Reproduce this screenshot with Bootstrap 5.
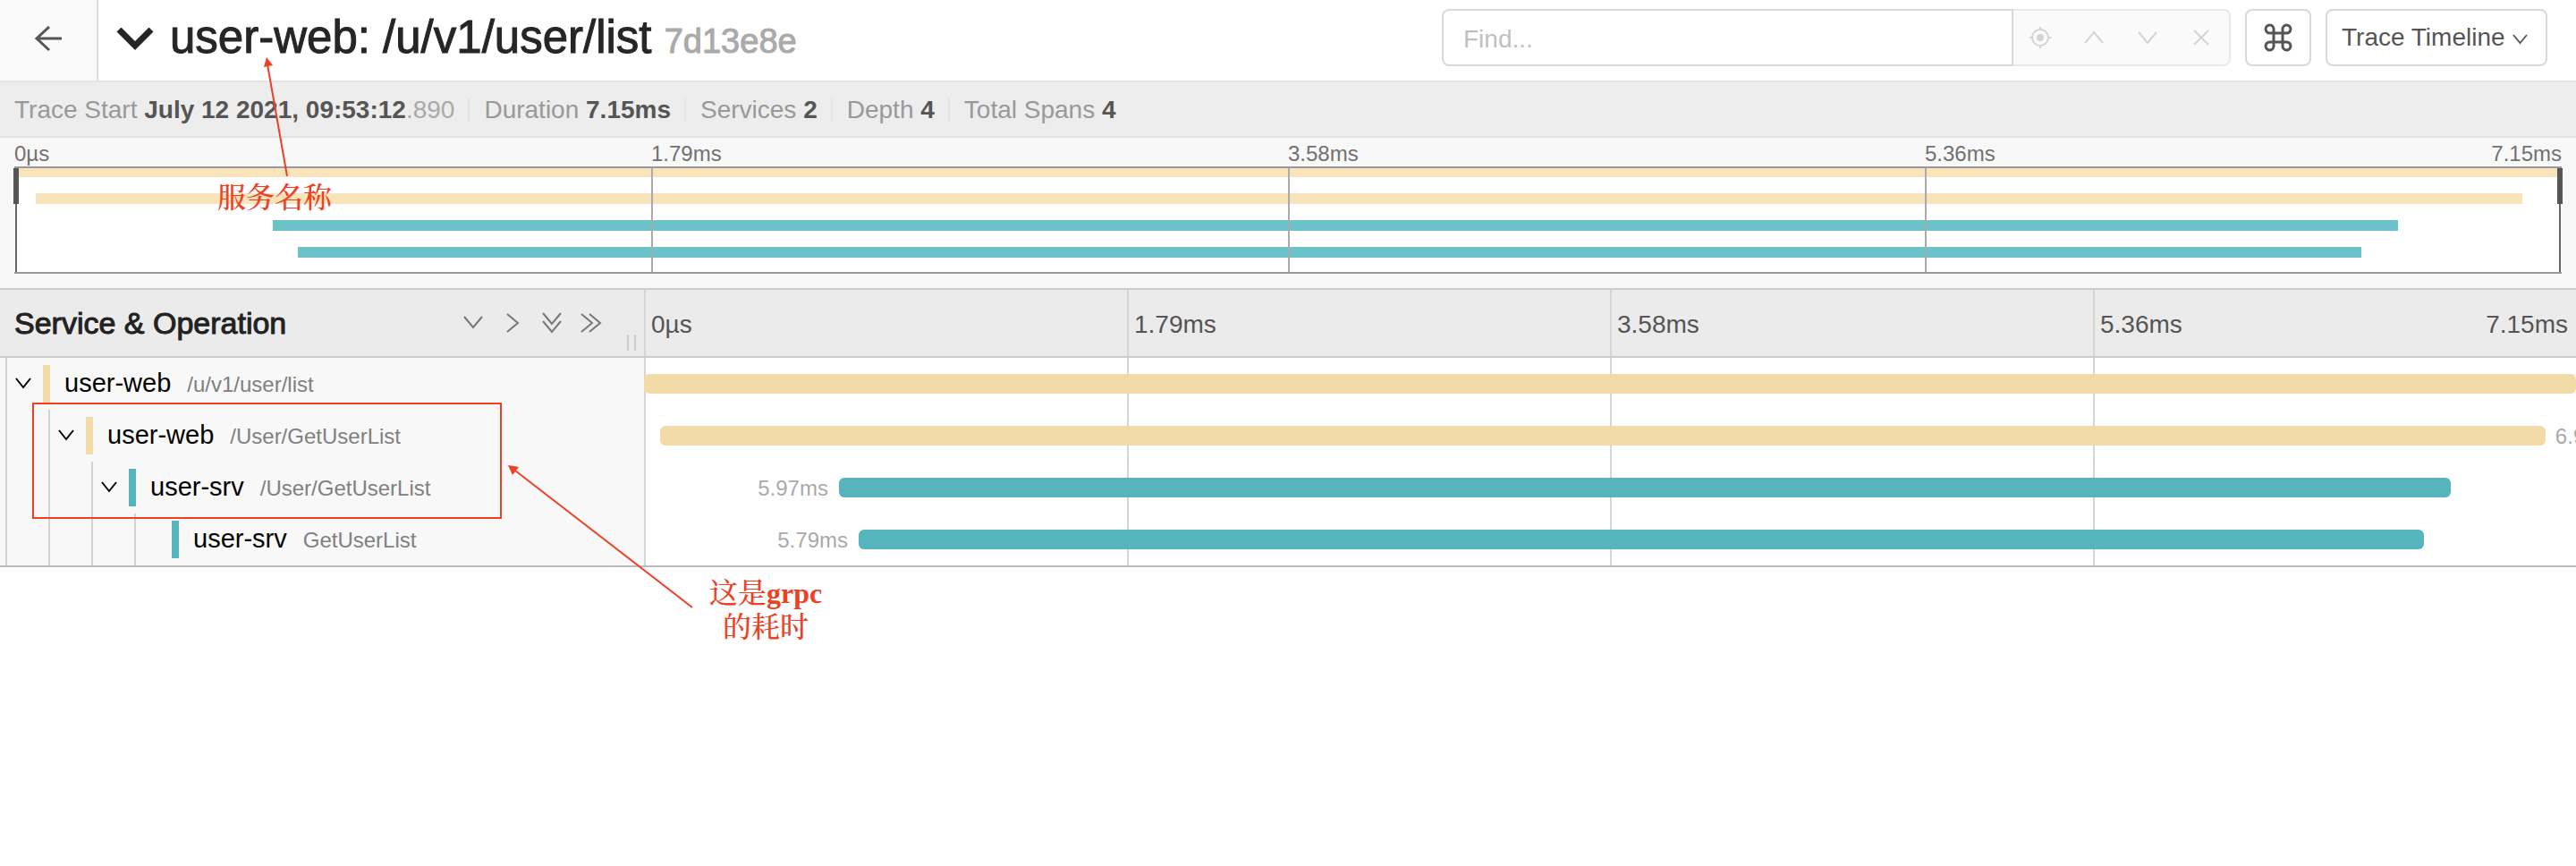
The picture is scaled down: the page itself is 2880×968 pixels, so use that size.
<!DOCTYPE html>
<html lang="en">
<head>
<meta charset="utf-8">
<meta name="viewport" content="width=device-width, initial-scale=1">
<title>user-web: /u/v1/user/list</title>
<link href="https://cdn.jsdelivr.net/npm/bootstrap@5.3.0/dist/css/bootstrap.min.css" rel="stylesheet">
<style>
  :root { --sand: #f3dba8; --teal: #55b4bc; --note: #ee4023; }
  body { font-family: "Liberation Sans", Arial, sans-serif; font-size: 28px; line-height: 32px; color: #555; background: #fff; }
  svg { display: block; fill: none; stroke: currentColor; }

  .top-bar { height: 92px; border-bottom: 2px solid #e4e4e4; padding-right: 32px; }
  .back-link { width: 110px; background: #fafafa; border-right: 2px solid #ddd; color: #555; }
  .title-toggle { margin-left: 20px; gap: 18px; color: #262626; }
  .title-text { font-size: 51px; line-height: 60px; padding-bottom: 2px; }
  .title-text, .col-title { -webkit-text-stroke: 1px currentColor; }
  .trace-id { font-size: 38px; color: #aaa; -webkit-text-stroke: 1px currentColor; }
  .tools { padding-bottom: 6px; }
  .find-group { width: 882px; height: 64px; }
  .find-group .form-control { border: 2px solid #d9d9d9; border-radius: 8px 0 0 8px; font-size: 28px; padding: 4px 22px 0; }
  .find-group .form-control::placeholder { color: #bfbfbf; }
  .find-tools { width: 243px; background: #fafafa; border: 2px solid #e8e8e8; border-left: 0; border-radius: 0 8px 8px 0; color: #d4d4d4; }
  .find-tools .btn { width: 60px; height: 60px; color: inherit; border: 0; padding: 0; }
  .tool-btn { height: 64px; border: 2px solid #d9d9d9; border-radius: 8px; color: #555; font-size: 28px; padding: 0 16px; background: #fff; }
  .key-btn { width: 74px; }
  .view-btn { width: 248px; }

  .summary { height: 62px; background: #ededed; border-bottom: 2px solid #e2e2e2; color: #999; padding: 2px 16px 0; }
  .summary li { line-height: 26px; padding-right: 15px; margin-right: 16px; border-right: 2px solid #e3e3e3; }
  .summary li:last-child { border: 0; }
  .summary strong { color: #555; }
  .summary strong span { color: #aaa; font-weight: 400; }

  .overview { background: #f8f8f8; padding: 4px 16px 16px; border-bottom: 2px solid #ccc; }
  .quarters { display: grid; grid-template-columns: repeat(4, 1fr); }
  .overview .quarters { font-size: 24px; line-height: 28px; color: #717171; }
  .minimap { position: relative; height: 120px; background: #fff; border: solid #999; border-width: 2px 0; }
  .minimap-bars { height: 116px; overflow: hidden; }
  .mini-bar { height: 12px; margin-bottom: 18px; background: #f8e3bb; }
  .mini-bar:first-child { height: 10px; }
  .mini-bar.srv { background: #6bc2c9; }
  .minimap .grid-lines > * + * { border-left: 2px solid #aaa; }
  .grid-lines { position: absolute; inset: 0; }
  .scrub { position: absolute; top: 0; bottom: 0; width: 2px; background: #666; }
  .scrub::before { content: ""; position: absolute; top: 0; left: -2px; width: 6px; height: 40px; background: #555; }
  .scrub-start { left: 1px; }
  .scrub-end { right: 1px; }

  .name-col { width: 25%; flex: none; }
  .head-row { height: 76px; background: #ebebeb; border-bottom: 2px solid #ccc; }
  .head-row .name-col { position: relative; padding: 0 44px 0 16px; }
  .col-title { font-size: 34px; line-height: 40px; font-weight: 400; color: #222; }
  .tree-btns { gap: 14px; }
  .tree-btn { width: 30px; height: 40px; border: 0; padding: 0; color: #777; }
  .resizer { position: absolute; right: 9px; bottom: 6px; width: 10px; height: 18px; border: solid #ccc; border-width: 0 2px; }
  .tick { border-left: 2px solid #d5d5d5; padding: 4px 6px 0; }
  .tick .last { margin-right: 3px; }

  .spans { border-bottom: 2px solid #bbb; }
  .span-row { height: 58px; }
  .span-row .name-col { background: #f8f8f8; padding-left: 6px; }
  .guide { width: 48px; flex: none; border-left: 2px solid #d3d3d3; }
  .guide.own { width: 42px; padding-left: 8px; }
  .guide .btn { width: 20px; height: 100%; border: 0; padding: 0; color: #000; }
  .swatch { width: 8px; height: 42px; flex: none; margin: 8px 16px 0 0; background: var(--sand); }
  .swatch.srv, .span-bar.srv { background: var(--teal); }
  .span-link { color: #000; font-size: 29px; gap: 18px; white-space: nowrap; padding-bottom: 2px; }
  .span-link small { color: #808080; font-size: 24px; line-height: 32px; padding-top: 4px; }
  .track { position: relative; overflow: hidden; font-size: 24px; color: #aaa; }
  .track .grid-lines > * { border-left: 2px solid #d5d5d5; }
  .offset-box { flex: none; position: relative; padding-right: 12px; padding-top: 2px; }
  .span-bar { flex: none; position: relative; height: 22px; border-radius: 6px; background: var(--sand); }
  .after-label { padding-left: 11px; padding-top: 2px; }

  .page { min-height: 100vh; }
  .notes { position: absolute; top: 0; left: 0; width: 940px; height: 740px; pointer-events: none; color: var(--note); }
  .note { position: absolute; font: 700 32px/38px "Liberation Serif", "Noto Serif CJK SC", "Noto Sans CJK SC", serif; text-align: center; white-space: nowrap; }
  .note .han { font-weight: 500; }
  .note-service { left: 243px; top: 202px; }
  .note-grpc { left: 793px; top: 644px; }
</style>
</head>
<body>
<div class="page position-relative">

<header class="top-bar d-flex align-items-center">
  <a href="#" class="back-link d-flex align-items-center justify-content-center align-self-stretch" aria-label="Back">
    <svg width="32" height="32" viewBox="0 0 32 32" stroke-width="3"><path d="M31 14H3M17 1L3 14l14 13"/></svg>
  </a>
  <a href="#" class="title-toggle d-flex align-items-center text-decoration-none">
    <svg width="42" height="28" viewBox="0 0 42 28" stroke-width="7"><path d="M3 2l18 18L39 2"/></svg>
    <h1 class="title-text m-0 fw-normal">user-web: /u/v1/user/list <span class="trace-id">7d13e8e</span></h1>
  </a>
  <div class="tools d-flex gap-3 ms-auto">
    <div class="find-group d-flex">
      <input class="form-control" type="text" placeholder="Find..." aria-label="Find">
      <div class="find-tools d-flex flex-shrink-0">
        <button class="btn" aria-label="Locate"><svg class="mx-auto" width="26" height="26" viewBox="0 0 26 26" stroke-width="2"><circle cx="13" cy="13" r="9"/><circle cx="13" cy="13" r="4" fill="currentColor" stroke="none"/><path d="M13 1v3M13 22v3M1 13h3M22 13h3"/></svg></button>
        <button class="btn" aria-label="Previous"><svg class="mx-auto" width="22" height="16" viewBox="0 0 22 16" stroke-width="2"><path d="M1 14L11 2l10 12"/></svg></button>
        <button class="btn" aria-label="Next"><svg class="mx-auto" width="22" height="16" viewBox="0 0 22 16" stroke-width="2"><path d="M1 2l10 12L21 2"/></svg></button>
        <button class="btn" aria-label="Clear"><svg class="mx-auto" width="20" height="20" viewBox="0 0 20 20" stroke-width="2"><path d="M2 2l16 16M18 2L2 18"/></svg></button>
      </div>
    </div>
    <button class="btn tool-btn key-btn" aria-label="Keyboard shortcuts">
      <svg class="mx-auto" width="32" height="32" viewBox="0 0 32 32" stroke-width="3"><path d="M11 11h10v10H11zM11 11V7a4.500 4.500 0 1 0-4.500 4H11M21 11V7a4.500 4.500 0 1 1 4.500 4H21M11 21v4a4.500 4.500 0 1 1-4.500-4H11M21 21v4a4.500 4.500 0 1 0 4.500-4H21"/></svg>
    </button>
    <button class="btn tool-btn view-btn d-flex align-items-center justify-content-between text-nowrap">Trace Timeline
      <svg class="me-1 mt-1" width="17" height="12" viewBox="0 0 17 12" stroke-width="1.800"><path d="M1 1l7.500 9L16 1"/></svg>
    </button>
  </div>
</header>

<ul class="summary list-unstyled d-flex align-items-center m-0">
  <li>Trace Start <strong>July 12 2021, 09:53:12<span>.890</span></strong></li>
  <li>Duration <strong>7.15ms</strong></li>
  <li>Services <strong>2</strong></li>
  <li>Depth <strong>4</strong></li>
  <li>Total Spans <strong>4</strong></li>
</ul>

<section class="overview">
  <div class="quarters">
    <span>0µs</span><span>1.79ms</span><span>3.58ms</span>
    <span class="d-flex justify-content-between"><span>5.36ms</span><span>7.15ms</span></span>
  </div>
  <div class="minimap">
    <div class="minimap-bars">
      <div class="mini-bar"></div>
      <div class="mini-bar" style="margin-left:.84%;width:97.610%"></div>
      <div class="mini-bar srv" style="margin-left:10.130%;width:83.430%"></div>
      <div class="mini-bar srv" style="margin-left:11.130%;width:81%"></div>
    </div>
    <div class="grid-lines quarters"><i></i><i></i><i></i><i></i></div>
    <div class="scrub scrub-start"></div>
    <div class="scrub scrub-end"></div>
  </div>
</section>

<main>
  <div class="head-row d-flex">
    <div class="name-col d-flex align-items-center justify-content-between">
      <h2 class="col-title m-0">Service &amp; Operation</h2>
      <div class="tree-btns d-flex">
        <button class="btn tree-btn" aria-label="Expand one level"><svg class="mx-auto" width="22" height="16" viewBox="0 0 22 16" stroke-width="2"><path d="M1 1l10 12L21 1"/></svg></button>
        <button class="btn tree-btn" aria-label="Collapse one level"><svg class="mx-auto" width="16" height="22" viewBox="0 0 16 22" stroke-width="2"><path d="M2 1l12 10L2 21"/></svg></button>
        <button class="btn tree-btn" aria-label="Expand all"><svg class="mx-auto" width="22" height="24" viewBox="0 0 22 24" stroke-width="2"><path d="M1 1l10 12L21 1M1 10l10 12 10-12"/></svg></button>
        <button class="btn tree-btn" aria-label="Collapse all"><svg class="mx-auto" width="24" height="22" viewBox="0 0 24 22" stroke-width="2"><path d="M1 1l12 10L1 21M10 1l12 10-12 10"/></svg></button>
      </div>
      <span class="resizer"></span>
    </div>
    <div class="quarters flex-grow-1">
      <div class="tick d-flex align-items-center">0µs</div>
      <div class="tick d-flex align-items-center">1.79ms</div>
      <div class="tick d-flex align-items-center">3.58ms</div>
      <div class="tick d-flex align-items-center justify-content-between"><span>5.36ms</span><span class="last">7.15ms</span></div>
    </div>
  </div>

  <div class="spans">
    <div class="span-row d-flex">
      <div class="name-col d-flex">
        <span class="guide own"><button class="btn" aria-label="Collapse"><svg width="20" height="14" viewBox="0 0 20 14" stroke-width="2"><path d="M2 1l8 10 8-10"/></svg></button></span>
        <span class="swatch"></span>
        <a href="#" class="span-link d-flex align-items-center text-decoration-none">user-web <small>/u/v1/user/list</small></a>
      </div>
      <div class="track d-flex align-items-center flex-grow-1">
        <div class="grid-lines quarters"><i></i><i></i><i></i><i></i></div>
        <div class="span-bar" style="width:100%"></div>
      </div>
    </div>
    <div class="span-row d-flex">
      <div class="name-col d-flex">
        <span class="guide"></span><span class="guide own"><button class="btn" aria-label="Collapse"><svg width="20" height="14" viewBox="0 0 20 14" stroke-width="2"><path d="M2 1l8 10 8-10"/></svg></button></span>
        <span class="swatch"></span>
        <a href="#" class="span-link d-flex align-items-center text-decoration-none">user-web <small>/User/GetUserList</small></a>
      </div>
      <div class="track d-flex align-items-center flex-grow-1">
        <div class="grid-lines quarters"><i></i><i></i><i></i><i></i></div>
        <div class="span-bar" style="margin-left:.84%;width:97.580%"></div>
        <span class="after-label">6.98ms</span>
      </div>
    </div>
    <div class="span-row d-flex">
      <div class="name-col d-flex">
        <span class="guide"></span><span class="guide"></span><span class="guide own"><button class="btn" aria-label="Collapse"><svg width="20" height="14" viewBox="0 0 20 14" stroke-width="2"><path d="M2 1l8 10 8-10"/></svg></button></span>
        <span class="swatch srv"></span>
        <a href="#" class="span-link d-flex align-items-center text-decoration-none">user-srv <small>/User/GetUserList</small></a>
      </div>
      <div class="track d-flex align-items-center flex-grow-1">
        <div class="grid-lines quarters"><i></i><i></i><i></i><i></i></div>
        <div class="offset-box text-end" style="width:10.090%">5.97ms</div>
        <div class="span-bar srv" style="width:83.430%"></div>
      </div>
    </div>
    <div class="span-row d-flex">
      <div class="name-col d-flex">
        <span class="guide"></span><span class="guide"></span><span class="guide"></span><span class="guide own"></span>
        <span class="swatch srv"></span>
        <a href="#" class="span-link d-flex align-items-center text-decoration-none">user-srv <small>GetUserList</small></a>
      </div>
      <div class="track d-flex align-items-center flex-grow-1">
        <div class="grid-lines quarters"><i></i><i></i><i></i><i></i></div>
        <div class="offset-box text-end" style="width:11.110%">5.79ms</div>
        <div class="span-bar srv" style="width:81%"></div>
      </div>
    </div>
  </div>
</main>

<!-- Annotations drawn over the trace -->
<aside class="notes">
  <svg width="940" height="740" viewBox="0 0 940 740" stroke-width="2">
    <path d="M321 197L299 72M774 679L576 526"/>
    <rect x="37" y="451" width="523" height="128"/>
    <path fill="currentColor" stroke="none" d="M298 64l-3 11 10-2zM568 520l5 11 7-9z"/>
  </svg>
  <div class="note note-service"><span class="han">服务名称</span></div>
  <div class="note note-grpc"><span class="han">这是</span>grpc<br><span class="han">的耗时</span></div>
</aside>

</div>
<script src="https://cdn.jsdelivr.net/npm/bootstrap@5.3.0/dist/js/bootstrap.bundle.min.js"></script>
</body>
</html>
